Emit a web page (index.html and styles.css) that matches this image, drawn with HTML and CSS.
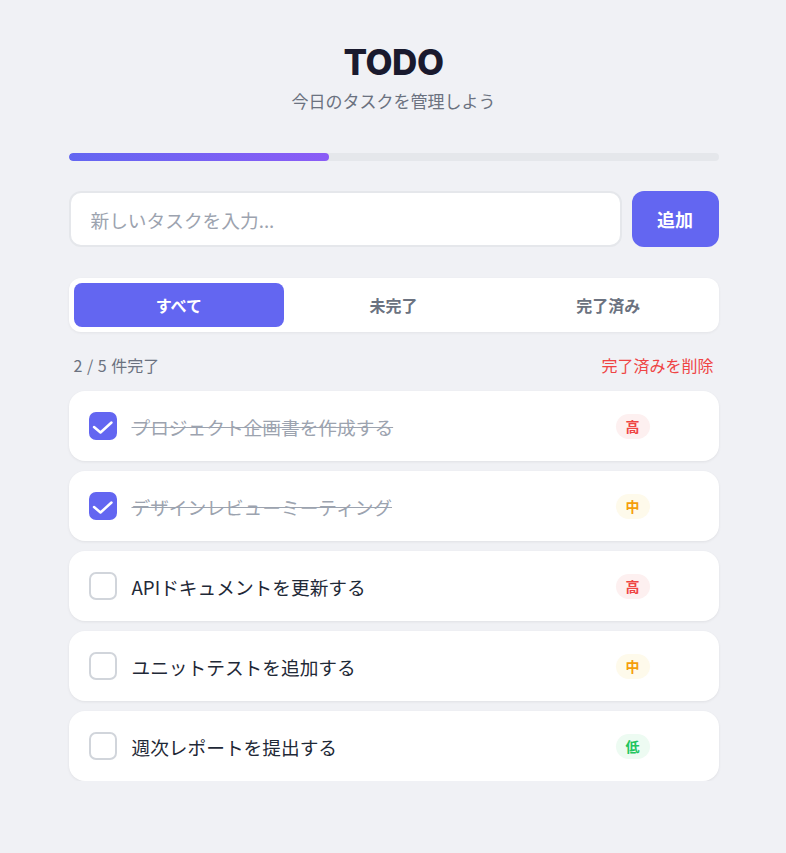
FILE: index.html
```html
<!DOCTYPE html>
<html lang="ja">
<head>
<meta charset="utf-8">
<title>TODO</title>
<link rel="stylesheet" href="styles.css">
</head>
<body>
<div class="app">
  <header class="header">
    <h1 class="title">TODO</h1>
    <p class="subtitle">今日のタスクを管理しよう</p>
  </header>

  <div class="progress"><div class="progress-fill" style="width:40%"></div></div>

  <div class="add-row">
    <input class="add-input" type="text" placeholder="新しいタスクを入力...">
    <button class="add-btn">追加</button>
  </div>

  <div class="tabs">
    <button class="tab active">すべて</button>
    <button class="tab">未完了</button>
    <button class="tab">完了済み</button>
  </div>

  <div class="stats">
    <span class="count">2 / 5 件完了</span>
    <button class="clear">完了済みを削除</button>
  </div>

  <ul class="list">
    <li class="item done">
      <span class="check"><svg viewBox="0 0 28 28" width="28" height="28"><path d="M5 15l6.5 5.5 11-10" fill="none" stroke="#fff" stroke-width="2.5" stroke-linecap="round" stroke-linejoin="round"/></svg></span>
      <span class="text">プロジェクト企画書を作成する</span>
      <span class="badge high">高</span>
      <button class="del">×</button>
    </li>
    <li class="item done">
      <span class="check"><svg viewBox="0 0 28 28" width="28" height="28"><path d="M5 15l6.5 5.5 11-10" fill="none" stroke="#fff" stroke-width="2.5" stroke-linecap="round" stroke-linejoin="round"/></svg></span>
      <span class="text">デザインレビューミーティング</span>
      <span class="badge mid">中</span>
      <button class="del">×</button>
    </li>
    <li class="item">
      <span class="check"></span>
      <span class="text">APIドキュメントを更新する</span>
      <span class="badge high">高</span>
      <button class="del">×</button>
    </li>
    <li class="item">
      <span class="check"></span>
      <span class="text">ユニットテストを追加する</span>
      <span class="badge mid">中</span>
      <button class="del">×</button>
    </li>
    <li class="item">
      <span class="check"></span>
      <span class="text">週次レポートを提出する</span>
      <span class="badge low">低</span>
      <button class="del">×</button>
    </li>
  </ul>
</div>
</body>
</html>
```

FILE: styles.css
```css
* { box-sizing: border-box; }
html, body { margin: 0; padding: 0; }
body {
  background: #f0f1f5;
  font-family: "Noto Sans CJK JP", "Noto Sans", sans-serif;
  color: #1f2937;
}
.app {
  width: 650px;
  margin: 0 auto;
  padding: 40px 0 0 1px;
  box-sizing: content-box;
}
.header { text-align: center; }
.title {
  margin: 0;
  font-family: Inter, "Noto Sans", sans-serif;
  font-size: 35px;
  font-weight: 800;
  line-height: 44px;
  color: #1a1a2e;
  letter-spacing: -0.5px;
}
.subtitle {
  margin: 5px 0 0;
  font-size: 17px;
  line-height: 24px;
  color: #6b7280;
}
.progress {
  margin-top: 40px;
  height: 8px;
  background: #e5e7eb;
  border-radius: 4px;
  overflow: hidden;
}
.progress-fill {
  height: 100%;
  border-radius: 4px;
  background: linear-gradient(90deg, #6366f1, #8b5cf6);
}
.add-row {
  display: flex;
  gap: 10px;
  margin-top: 30px;
}
.add-input {
  flex: 1;
  height: 56px;
  border: 2px solid #e5e7eb;
  border-radius: 12px;
  background: #fff;
  padding: 0 20px;
  font-family: inherit;
  font-size: 18.7px;
  color: #1f2937;
  outline: none;
}
.add-input::placeholder { color: #9ca3af; }
.add-btn {
  width: 87px;
  height: 56px;
  border: none;
  border-radius: 12px;
  background: #6366f1;
  color: #fff;
  font-family: inherit;
  font-size: 18px;
  font-weight: 700;
}
.tabs {
  display: grid;
  grid-template-columns: 1fr 1fr 1fr;
  gap: 4px;
  margin-top: 31px;
  padding: 5px;
  background: #fff;
  border-radius: 12px;
  box-shadow: 0 1px 3px rgba(0,0,0,0.06);
}
.tab {
  height: 44px;
  border: none;
  border-radius: 8px;
  background: transparent;
  font-family: inherit;
  font-size: 16px;
  font-weight: 600;
  color: #6b7280;
}
.tab.active { background: #6366f1; color: #fff; }
.stats {
  display: flex;
  justify-content: space-between;
  align-items: center;
  margin-top: 20px;
  padding: 0 5px;
  height: 26px;
}
.count { font-size: 16px; color: #6b7280; word-spacing: 1px; }
.clear {
  border: none;
  background: none;
  padding: 0;
  font-family: inherit;
  font-size: 16px;
  color: #ef4444;
}
.list {
  list-style: none;
  margin: 13px 0 0;
  padding: 0;
  display: flex;
  flex-direction: column;
  gap: 10px;
}
.item {
  display: flex;
  align-items: center;
  gap: 15px;
  height: 70px;
  padding: 0 20px;
  background: #fff;
  border-radius: 16px;
  box-shadow: 0 1px 3px rgba(0,0,0,0.07);
}
.check {
  flex: none;
  width: 28px;
  height: 28px;
  border: 2px solid #d1d5db;
  border-radius: 7px;
  display: flex;
  align-items: center;
  justify-content: center;
}
.item.done .check {
  background: #6366f1;
  border-color: #6366f1;
}
.check svg { flex: none; }
.text {
  flex: 1;
  font-size: 18.7px;
  color: #1f2937;
}
.item.done .text {
  color: #9ca3af;
  text-decoration: line-through;
}
.badge {
  flex: none;
  padding: 3px 10px;
  border-radius: 13px;
  font-size: 14px;
  font-weight: 700;
  line-height: 19px;
}
.badge.high { background: #fdf0f0; color: #ef4444; }
.badge.mid { background: #fefaeb; color: #f59e0b; }
.badge.low { background: #edfbf2; color: #22c55e; }
.del {
  flex: none;
  width: 36px;
  height: 36px;
  margin-left: -2px;
  border: none;
  background: none;
  opacity: 0;
  font-size: 20px;
  color: #9ca3af;
}
```
